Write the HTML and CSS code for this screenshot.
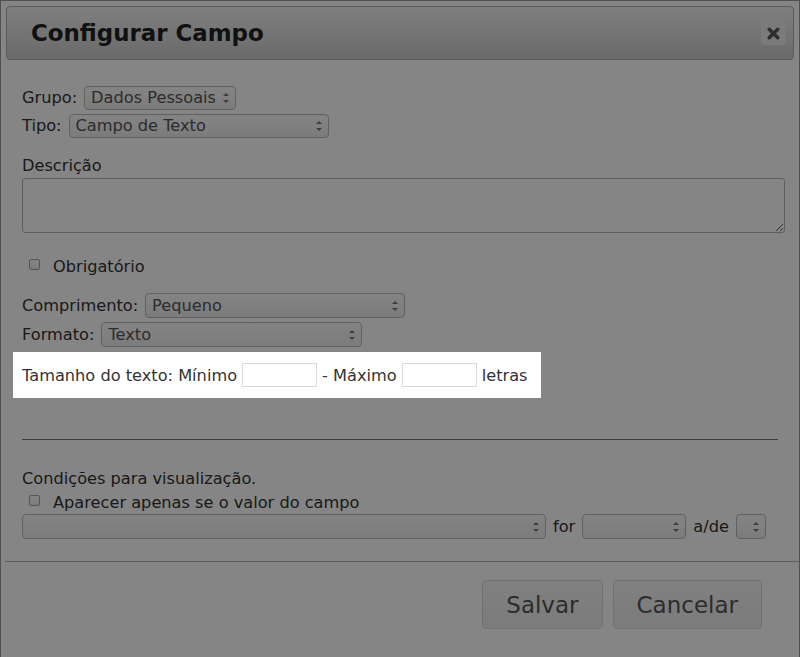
FILE: index.html
```html
<!DOCTYPE html>
<html lang="pt">
<head>
<meta charset="utf-8">
<title>Configurar Campo</title>
<link rel="stylesheet" href="styles.css">
</head>
<body>
<div class="dialog">
  <div class="titlebar">
    <h1 class="title">Configurar Campo</h1>
    <button class="close" type="button" aria-label="Fechar">
      <svg width="13" height="13" viewBox="0 0 13 13"><path d="M2.2 2.2 L10.8 10.8 M10.8 2.2 L2.2 10.8" stroke="#585858" stroke-width="3.4" stroke-linecap="round" fill="none"/></svg>
    </button>
  </div>
  <div class="content">
    <div class="row">
      <span>Grupo:</span>
      <span class="sel"><select class="w-grupo"><option>Dados Pessoais</option></select></span>
    </div>
    <div class="row">
      <span>Tipo:</span>
      <span class="sel"><select class="w-tipo"><option>Campo de Texto</option></select></span>
    </div>
    <div class="label-desc">Descrição</div>
    <textarea class="desc"></textarea>
    <label class="check check-obrig"><input type="checkbox" class="cb"><span>Obrigatório</span></label>
    <div class="row row-comp">
      <span>Comprimento:</span>
      <span class="sel"><select class="w-comp"><option>Pequeno</option></select></span>
    </div>
    <div class="row row-fmt">
      <span>Formato:</span>
      <span class="sel"><select class="w-fmt"><option>Texto</option></select></span>
    </div>
    <div class="highlight">
      <span>Tamanho do texto: Mínimo</span>
      <input type="text" class="num">
      <span>- Máximo</span>
      <input type="text" class="num">
      <span>letras</span>
    </div>
    <hr class="sep">
    <div class="cond-title">Condições para visualização.</div>
    <label class="check check-cond"><input type="checkbox" class="cb"><span>Aparecer apenas se o valor do campo</span></label>
    <div class="row row-cond">
      <span class="sel"><select class="w-campo"><option></option></select></span>
      <span>for</span>
      <span class="sel"><select class="w-for"><option></option></select></span>
      <span>a/de</span>
      <span class="sel"><select class="w-ade"><option></option></select></span>
    </div>
  </div>
  <div class="footer">
    <button class="btn" type="button">Salvar</button>
    <button class="btn" type="button">Cancelar</button>
  </div>
</div>
</body>
</html>
```
FILE: styles.css
```css
* { box-sizing: border-box; }
html, body { margin: 0; padding: 0; }
body {
  width: 800px;
  height: 657px;
  overflow: hidden;
  background: #fff;
  font-family: "DejaVu Sans", Verdana, sans-serif;
  font-size: 16.2px;
  color: #333;
}
.dialog {
  height: 670px;
  border: 1px solid #9a9a9a;
  padding: 5px;
  background: #fff;
}
.titlebar {
  height: 54px;
  border: 1px solid #adadad;
  border-radius: 4px;
  background: linear-gradient(#f4f4f4, #cbcbcb);
  display: flex;
  align-items: center;
  justify-content: space-between;
  padding: 0 7px 0 24px;
}
.title {
  margin: 0;
  font-size: 22.9px;
  font-weight: bold;
  color: #222;
  line-height: 26px;
}
.close {
  width: 25px;
  height: 24px;
  border: none;
  border-radius: 3px;
  background: #ebebeb;
  padding: 0;
  display: flex;
  align-items: center;
  justify-content: center;
}
.content { padding: 26px 16px 0; }
.row {
  display: flex;
  align-items: center;
  gap: 7px;
  height: 24px;
  margin-bottom: 4px;
  line-height: 20px;
}
.sel { position: relative; display: inline-block; height: 24px; }
.sel select {
  -webkit-appearance: none;
  appearance: none;
  display: block;
  height: 24px;
  margin: 0;
  border: 1px solid #b9b9b9;
  border-radius: 4px;
  background: linear-gradient(#fdfdfd, #ededed);
  font-family: inherit;
  font-size: 16.2px;
  color: #555;
  padding: 0 20px 0 6px;
  line-height: 22px;
}
.sel::before, .sel::after {
  content: "";
  position: absolute;
  right: 7px;
  width: 0;
  height: 0;
  border-left: 3px solid transparent;
  border-right: 3px solid transparent;
}
.sel::before { top: calc(50% - 5px); border-bottom: 3px solid #777; }
.sel::after { top: calc(50% + 2px); border-top: 3px solid #777; }
.w-grupo { width: 152px; }
.w-tipo { width: 260px; }
.w-comp { width: 260px; }
.w-fmt { width: 261px; }
.w-campo { width: 524px; }
.w-for { width: 104px; }
.w-ade { width: 30px; }

.label-desc { margin-top: 18px; line-height: 20px; }
.desc {
  display: block;
  width: 763px;
  height: 55px;
  margin: 2px 0 0;
  border: 1px solid #b5b5b5;
  border-radius: 3px;
  background: #fff;
  font-family: inherit;
}
.check {
  display: flex;
  align-items: flex-start;
  gap: 13px;
  line-height: 20px;
  height: 20px;
}
.check-obrig { margin-top: 24px; }
.cb {
  -webkit-appearance: none;
  appearance: none;
  width: 11px;
  height: 11px;
  margin: 2px 0 0 7px;
  border: 1px solid #a6a6a6;
  border-radius: 2px;
  background: linear-gradient(#ffffff, #ececec);
}
.row-comp { margin-top: 16px; height: 25px; }
.row-comp .sel, .row-comp select, .row-fmt .sel, .row-fmt select { height: 25px; }
.row-fmt { height: 25px; margin-bottom: 0; }
.highlight {
  position: relative;
  z-index: 2;
  display: flex;
  align-items: center;
  gap: 5px;
  width: 528px;
  height: 46px;
  margin: 5px 0 0 -9px;
  padding: 0 9px;
  background: #fff;
  color: #333;
  box-shadow: 0 0 0 2000px rgba(0, 0, 0, 0.478);
}
.num {
  width: 75px;
  height: 24px;
  margin: 0;
  border: 1px solid #d9d9d9;
  background: #fff;
  font-family: inherit;
  font-size: 16px;
}
.sep {
  width: 756px;
  margin: 41px 0 0;
  border: none;
  border-top: 1px solid #777;
  height: 0;
}
.cond-title { margin-top: 29px; line-height: 20px; }
.check-cond { margin-top: 4px; }
.row-cond { margin-top: 1px; height: 25px; margin-bottom: 0; }
.row-cond .sel, .row-cond select { height: 25px; }
.footer {
  margin: 22px -5px 0 -1px;
  border-top: 1px solid #b3b3b3;
  padding: 18px 37px 0 0;
  display: flex;
  justify-content: flex-end;
  gap: 10px;
}
.btn {
  height: 49px;
  padding: 0 23px;
  border: 1px solid #d8d8d8;
  border-radius: 4px;
  background: linear-gradient(#f6f6f6, #ececec);
  font-family: inherit;
  font-size: 23px;
  color: #555;
}
```
